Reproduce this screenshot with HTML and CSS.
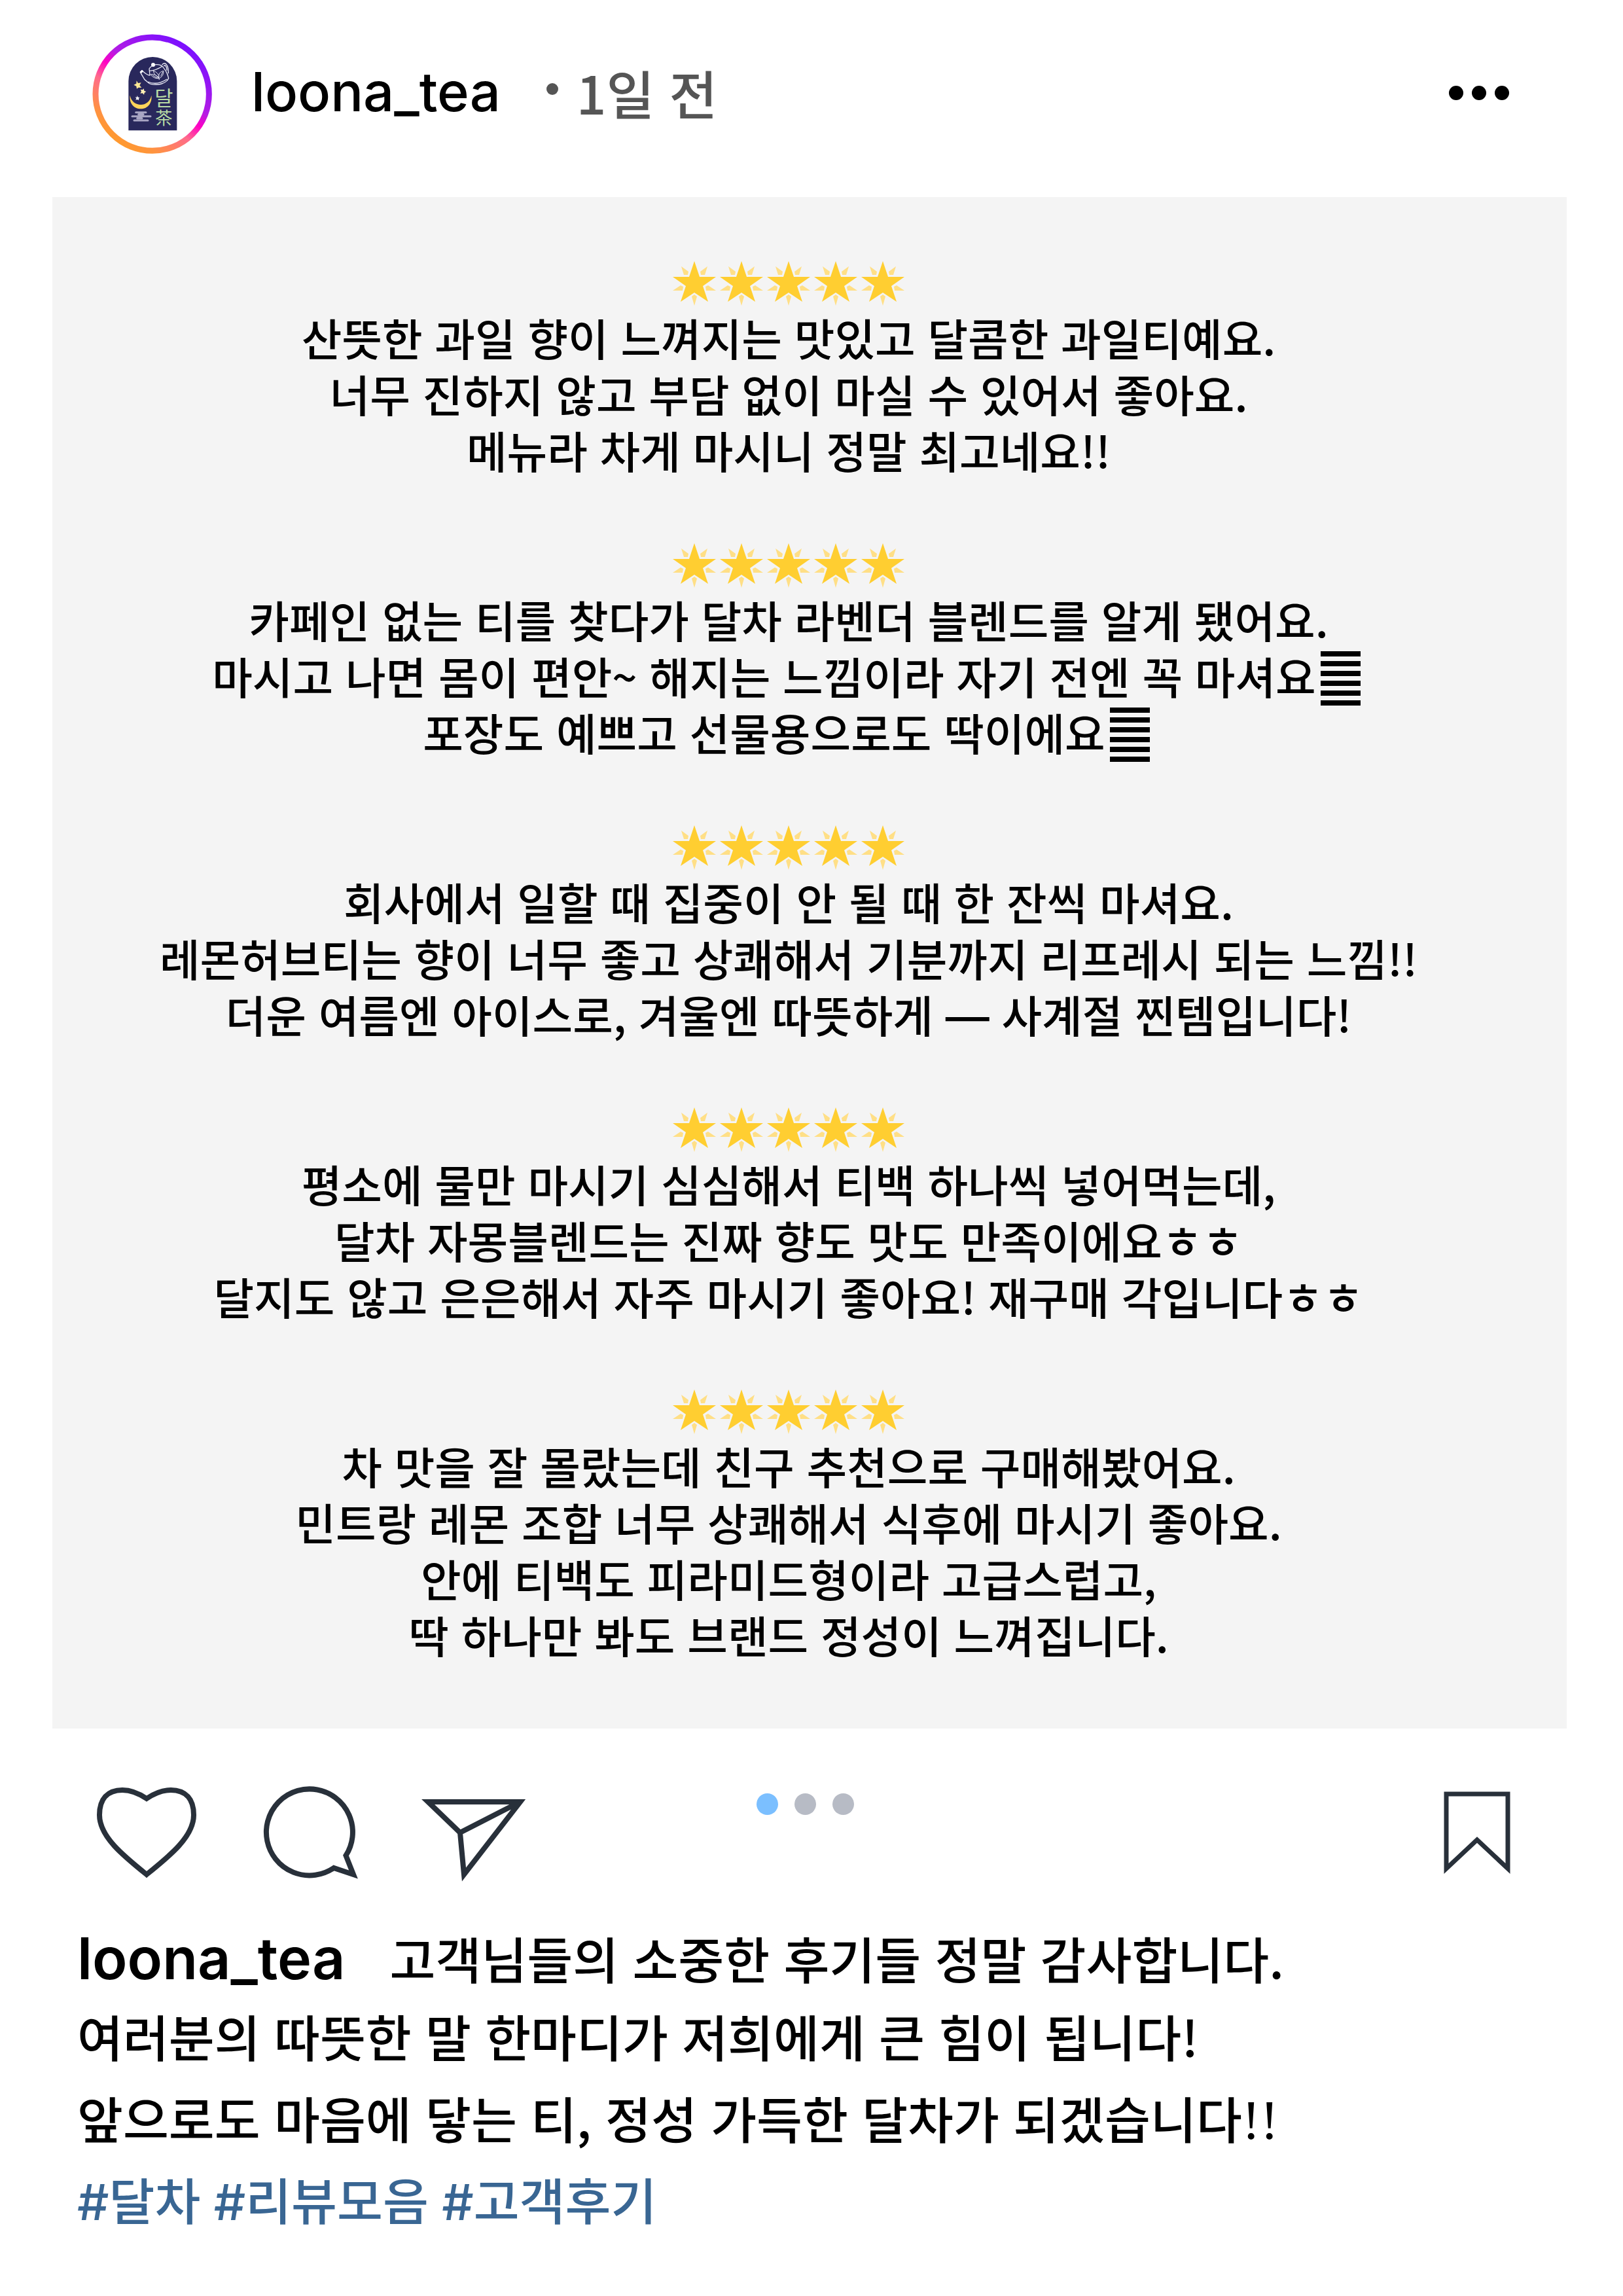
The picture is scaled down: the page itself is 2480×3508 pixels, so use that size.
FILE: index.html
```
<!DOCTYPE html>
<html lang="ko">
<head>
<meta charset="utf-8">
<meta name="viewport" content="width=device-width, initial-scale=1">
<title>loona_tea</title>
<link rel="stylesheet" href="styles.css">
</head>
<body>
<svg class="sprite" aria-hidden="true">
  <symbol id="star" viewBox="0 0 72 72">
    <path fill="#ffdf86" d="M16 10 27 18 26 23H20ZM56 10 45 18 46 23H52ZM3 47 15 39 19 41 18 47ZM69 47 57 39 53 41 54 47ZM36 70 32 56 36 53 40 56Z"/>
    <path fill="#ffce31" d="M36 2 44 26H69L49 40 57 64 36 50 15 64 23 40 3 26H28Z"/>
  </symbol>
  <symbol id="stars" viewBox="0 0 360 72">
    <use href="#star" width="72" height="72"/>
    <use href="#star" x="72" width="72" height="72"/>
    <use href="#star" x="144" width="72" height="72"/>
    <use href="#star" x="216" width="72" height="72"/>
    <use href="#star" x="288" width="72" height="72"/>
  </symbol>
  <symbol id="bars" viewBox="0 0 61 83">
    <path d="M0 0H61V8H0ZM0 15H61V23H0ZM0 30H61V38H0ZM0 45H61V53H0ZM0 60H61V68H0ZM0 75H61V83H0Z"/>
  </symbol>
</svg>
<article class="post">
  <header class="post-header">
    <svg class="avatar" viewBox="62 65 549 549" role="img" aria-label="달차">
      <defs>
        <linearGradient id="ring" gradientUnits="userSpaceOnUse" x1="181" y1="566" x2="493" y2="114">
          <stop offset="0" stop-color="#ff9a2e"/>
          <stop offset=".12" stop-color="#ff9340"/>
          <stop offset=".36" stop-color="#ff6b8b"/>
          <stop offset=".5" stop-color="#ff00c4"/>
          <stop offset=".62" stop-color="#b41ce4"/>
          <stop offset="1" stop-color="#7a10ff"/>
        </linearGradient>
      </defs>
      <circle cx="337" cy="340" r="260" fill="#fff" stroke="url(#ring)" stroke-width="27"/>
      <path fill="#29285c" d="M228 507V281a111 111 0 0 1 222 0V507Z"/>
      <g fill="none" stroke="#e8e8f4" stroke-width="4" stroke-linejoin="round">
        <path d="M323 224C340 198 372 202 384 214C400 232 408 250 412 268C400 292 366 302 330 294C318 292 314 282 302 274L282 240L290 232C304 244 310 252 326 254ZM324 234Q354 232 384 212M382 206C396 188 412 208 411 246M390 212C398 202 404 218 404 232M318 284Q360 302 404 272"/>
        <path stroke-width="3" d="M369 275C364 250 368 240 388 234C390 252 380 262 369 268C350 270 336 262 330 250C348 248 362 256 368 268C352 256 344 246 342 234C356 238 366 248 368 262M376 258L386 238M338 254L362 268"/>
      </g>
      <circle cx="341" cy="206" r="9" fill="#fff"/>
      <path d="M280 238L290 229 296 236 288 244Z" fill="#fff"/>
      <path fill="#ffe996" d="M265 279L272 290 286 288 279 300 288 311 274 310 266 316 264 304 252 298 264 292Z"/>
      <path fill="#fff0b4" d="M298 315L300 325 309 329 301 334 299 343 292 336 282 337 287 328 283 319 292 321Z"/>
      <path fill="#fff" d="M268 347L272 355 279 356 274 362 276 369 268 365 261 367 264 360 259 354 267 355Z"/>
      <path fill="#ffd45a" d="M235 346C244 401 322 405 333 346C338 382 315 408 284 408C253 408 230 381 235 346Z"/>
      <path stroke="#a9a6c4" stroke-width="9" stroke-linecap="round" fill="none" d="M262 424H308M245 442H329M254 461H317M274 433H296M268 451H290"/>
      <g fill="#b8dca4" font-family="'Noto Sans CJK KR', sans-serif" font-weight="400" text-anchor="middle">
        <text x="390" y="391" font-size="92">달</text>
        <text x="390" y="478" font-size="78">茶</text>
      </g>
    </svg>
    <a class="account" href="#">loona_tea</a>
    <time class="time"><span class="time-dot"></span>1일 전</time>
    <button class="icon-button more" type="button" aria-label="더 보기">
      <svg width="100" height="60" viewBox="0 0 100 60"><circle cx="15" cy="30" r="11"/><circle cx="50" cy="30" r="11"/><circle cx="85" cy="30" r="11"/></svg>
    </button>
  </header>

  <section class="reviews">
    <div class="review">
      <svg class="rating" role="img" aria-label="별 다섯 개"><use href="#stars"/></svg>
      <p>산뜻한 과일 향이 느껴지는 맛있고 달콤한 과일티예요.</p>
      <p>너무 진하지 않고 부담 없이 마실 수 있어서 좋아요.</p>
      <p>메뉴라 차게 마시니 정말 최고네요!!</p>
    </div>
    <div class="review">
      <svg class="rating" role="img" aria-label="별 다섯 개"><use href="#stars"/></svg>
      <p>카페인 없는 티를 찾다가 달차 라벤더 블렌드를 알게 됐어요.</p>
      <p>마시고 나면 몸이 편안~ 해지는 느낌이라 자기 전엔 꼭 마셔요<svg class="bars" aria-hidden="true"><use href="#bars"/></svg></p>
      <p>포장도 예쁘고 선물용으로도 딱이에요<svg class="bars" aria-hidden="true"><use href="#bars"/></svg></p>
    </div>
    <div class="review">
      <svg class="rating" role="img" aria-label="별 다섯 개"><use href="#stars"/></svg>
      <p>회사에서 일할 때 집중이 안 될 때 한 잔씩 마셔요.</p>
      <p>레몬허브티는 향이 너무 좋고 상쾌해서 기분까지 리프레시 되는 느낌!!</p>
      <p>더운 여름엔 아이스로, 겨울엔 따뜻하게 <span class="dash">—</span> 사계절 찐템입니다!</p>
    </div>
    <div class="review">
      <svg class="rating" role="img" aria-label="별 다섯 개"><use href="#stars"/></svg>
      <p>평소에 물만 마시기 심심해서 티백 하나씩 넣어먹는데,</p>
      <p>달차 자몽블렌드는 진짜 향도 맛도 만족이에요ㅎㅎ</p>
      <p>달지도 않고 은은해서 자주 마시기 좋아요! 재구매 각입니다ㅎㅎ</p>
    </div>
    <div class="review">
      <svg class="rating" role="img" aria-label="별 다섯 개"><use href="#stars"/></svg>
      <p>차 맛을 잘 몰랐는데 친구 추천으로 구매해봤어요.</p>
      <p>민트랑 레몬 조합 너무 상쾌해서 식후에 마시기 좋아요.</p>
      <p>안에 티백도 피라미드형이라 고급스럽고,</p>
      <p>딱 하나만 봐도 브랜드 정성이 느껴집니다.</p>
    </div>
  </section>

  <div class="actions">
    <div class="action-group">
      <button class="icon-button" type="button" aria-label="좋아요">
        <svg class="line-icon" width="170" height="160" viewBox="0 0 170 160"><path d="M84 28C72 20 60 15 47 15C24 15 12 29 12 53C12 86 48 115 84 144C120 115 156 86 156 53C156 29 144 15 121 15C108 15 96 20 84 28Z"/></svg>
      </button>
      <button class="icon-button" type="button" aria-label="댓글">
        <svg class="line-icon" width="170" height="160" viewBox="0 0 170 160"><path d="M138.500 115A66 66 0 1 0 120 134L150 144Z"/></svg>
      </button>
      <button class="icon-button" type="button" aria-label="공유">
        <svg class="line-icon" width="170" height="160" viewBox="0 0 170 160"><path d="M14 33H155L69 144L63 80ZM63 80L155 33"/></svg>
      </button>
    </div>
    <div class="pager"><span class="dot active"></span><span class="dot"></span><span class="dot"></span></div>
    <button class="icon-button save" type="button" aria-label="저장">
      <svg class="line-icon thin" width="120" height="160" viewBox="0 0 120 160"><path d="M10 21H104V135L57 91L10 135Z"/></svg>
    </button>
  </div>

  <div class="caption">
    <p class="lead"><a class="caption-name" href="#">loona_tea</a><span>고객님들의 소중한 후기들 정말 감사합니다.</span></p>
    <p>여러분의 따뜻한 말 한마디가 저희에게 큰 힘이 됩니다!</p>
    <p>앞으로도 마음에 닿는 티, 정성 가득한 달차가 되겠습니다<span class="serif">!!</span></p>
    <p class="tags"><a href="#">#달차</a> <a href="#">#리뷰모음</a> <a href="#">#고객후기</a></p>
  </div>
</article>
</body>
</html>
```
FILE: styles.css
```
* { box-sizing: border-box; }
body {
  margin: 0;
  background: #fff;
  color: #000;
  font-family: "Noto Sans CJK KR", sans-serif;
  font-weight: 500;
}
p { margin: 0; }
a { color: inherit; text-decoration: none; }
svg { display: block; }
.sprite { position: absolute; width: 0; height: 0; }

.post-header {
  display: flex;
  align-items: center;
  padding: 52px 170px 66px 141px;
}
.avatar { width: 183px; height: 183px; }
.account {
  margin: 0 0 8px 60px;
  font: 500 83px/100px Inter, sans-serif;
}
.time {
  display: flex;
  align-items: center;
  margin: 0 0 8px 70px;
  color: #555;
  font-size: 80px;
  line-height: 100px;
}
.time-dot {
  width: 18px;
  height: 18px;
  margin: 0 28px 8px 0;
  border-radius: 50%;
  background: #555;
}
.icon-button {
  padding: 0;
  border: 0;
  background: none;
  color: inherit;
}
.more { margin: 0 0 4px auto; }

.reviews {
  display: flex;
  flex-direction: column;
  gap: 89px;
  margin: 0 86px 0 80px;
  padding: 87px 64px 101px 0;
  background: #f4f4f4;
  text-align: center;
  font-size: 67px;
  line-height: 86px;
}
.rating {
  width: 360px;
  height: 72px;
  margin: 9px auto 3px;
}
.bars {
  display: inline-block;
  width: 61px;
  height: 83px;
  margin: -9px 7px;
  vertical-align: -8px;
}
.dash {
  font-family: Inter, sans-serif;
  line-height: 60px;
}

.actions {
  display: grid;
  grid-template-columns: 1fr auto 1fr;
  padding: 79px 160px 0 140px;
}
.action-group { display: flex; gap: 80px; }
.line-icon {
  fill: none;
  stroke: #28303a;
  stroke-width: 8;
  stroke-miterlimit: 10;
}
.line-icon.thin { stroke-width: 7; }
.pager { display: flex; gap: 25px; margin-top: 20px; }
.dot {
  width: 33px;
  height: 33px;
  border-radius: 50%;
  background: #b7bbc5;
}
.dot.active { background: #7bbfff; }
.save { justify-self: end; }

.caption {
  padding: 56px 118px 80px;
  font-size: 76px;
  line-height: 125px;
}
.lead {
  display: flex;
  align-items: baseline;
  gap: 68px;
  line-height: 111px;
}
.caption-name {
  font-family: Inter, sans-serif;
  font-size: 88px;
  font-weight: 600;
}
.serif {
  font-family: "Liberation Serif", serif;
  font-size: 84px;
  font-weight: 400;
  line-height: 80px;
}
.tags {
  padding-top: 4px;
  color: #396693;
  font-family: Inter, "Noto Sans CJK KR", sans-serif;
}
```
